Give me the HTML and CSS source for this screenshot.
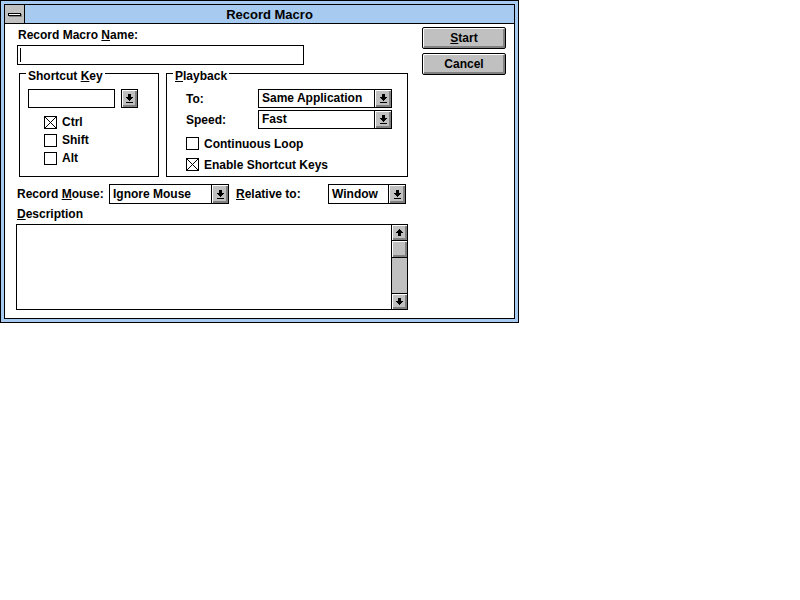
FILE: index.html
```html
<!DOCTYPE html>
<html lang="en">
<head>
    <meta charset="UTF-8">
    <title>Record Macro</title>
    <link rel="stylesheet" href="styles.css">
</head>
<body>
<div class="window">
  <div class="frame">
    <div class="titlebar">
        <div class="sysmenu"><span class="sysbar"></span></div>
        <div class="title">Record Macro</div>
    </div>

    <div class="dialog">
      <div class="main">
        <div class="label name-label">Record Macro <u>N</u>ame:</div>
        <div class="textbox name-input"><span class="caret"></span></div>

        <div class="groups">
          <fieldset class="group shortcut">
            <legend>Shortcut <u>K</u>ey</legend>
            <div class="key-row">
                <div class="textbox key-input"></div>
                <div class="btn3d drop-btn">
                    <svg width="7" height="9" viewBox="0 0 7 9" shape-rendering="crispEdges"><path d="M2 0h3v3h2v1h-1v1h-1v1h-1v1h-1v-1h-1v-1h-1v-1h-1v-1h2z" fill="#000"/><rect x="0" y="8" width="7" height="1" fill="#000"/></svg>
                </div>
            </div>
            <div class="checks">
                <div class="check-row"><span class="box checked"></span>Ctrl</div>
                <div class="check-row"><span class="box"></span>Shift</div>
                <div class="check-row"><span class="box"></span>Alt</div>
            </div>
          </fieldset>

          <fieldset class="group playback">
            <legend><u>P</u>layback</legend>
            <div class="pb-body">
                <div class="field-row">
                    <span class="field-label">To:</span>
                    <div class="combo wide">
                        <span class="combo-text">Same Application</span>
                        <span class="btn3d combo-btn"><svg width="7" height="9" viewBox="0 0 7 9" shape-rendering="crispEdges"><path d="M2 0h3v3h2v1h-1v1h-1v1h-1v1h-1v-1h-1v-1h-1v-1h-1v-1h2z" fill="#000"/><rect x="0" y="8" width="7" height="1" fill="#000"/></svg></span>
                    </div>
                </div>
                <div class="field-row second">
                    <span class="field-label">Speed:</span>
                    <div class="combo wide">
                        <span class="combo-text">Fast</span>
                        <span class="btn3d combo-btn"><svg width="7" height="9" viewBox="0 0 7 9" shape-rendering="crispEdges"><path d="M2 0h3v3h2v1h-1v1h-1v1h-1v1h-1v-1h-1v-1h-1v-1h-1v-1h2z" fill="#000"/><rect x="0" y="8" width="7" height="1" fill="#000"/></svg></span>
                    </div>
                </div>
                <div class="check-row tall first"><span class="box"></span>Continuous Loop</div>
                <div class="check-row tall"><span class="box checked"></span>Enable Shortcut Keys</div>
            </div>
          </fieldset>
        </div>

        <div class="mouse-row">
            <span class="label mouse-label">Record <u>M</u>ouse:</span>
            <div class="combo mouse">
                <span class="combo-text">Ignore Mouse</span>
                <span class="btn3d combo-btn"><svg width="7" height="9" viewBox="0 0 7 9" shape-rendering="crispEdges"><path d="M2 0h3v3h2v1h-1v1h-1v1h-1v1h-1v-1h-1v-1h-1v-1h-1v-1h2z" fill="#000"/><rect x="0" y="8" width="7" height="1" fill="#000"/></svg></span>
            </div>
            <span class="label rel-label"><u>R</u>elative to:</span>
            <div class="combo rel">
                <span class="combo-text">Window</span>
                <span class="btn3d combo-btn"><svg width="7" height="9" viewBox="0 0 7 9" shape-rendering="crispEdges"><path d="M2 0h3v3h2v1h-1v1h-1v1h-1v1h-1v-1h-1v-1h-1v-1h-1v-1h2z" fill="#000"/><rect x="0" y="8" width="7" height="1" fill="#000"/></svg></span>
            </div>
        </div>

        <div class="label desc-label"><u>D</u>escription</div>
        <div class="memo">
            <div class="memo-text"></div>
            <div class="scrollbar">
                <div class="btn3d sb-btn up">
                    <svg width="7" height="7" viewBox="0 0 7 7" shape-rendering="crispEdges"><path d="M3 0h1v1h1v1h1v1h1v1h-2v3h-3v-3h-2v-1h1v-1h1v-1h1z" fill="#000"/></svg>
                </div>
                <div class="btn3d sb-thumb"></div>
                <div class="sb-track"></div>
                <div class="btn3d sb-btn down">
                    <svg width="7" height="7" viewBox="0 0 7 7" shape-rendering="crispEdges"><path d="M2 0h3v3h2v1h-1v1h-1v1h-1v1h-1v-1h-1v-1h-1v-1h-1v-1h2z" fill="#000"/></svg>
                </div>
            </div>
        </div>
      </div>

      <div class="buttons">
          <div class="btn3d push"><span><u>S</u>tart</span></div>
          <div class="btn3d push"><span>Cancel</span></div>
      </div>
    </div>
  </div>
</div>
</body>
</html>
```

FILE: styles.css
```css
body{
    margin: 0;
    background: #fff;
    font-family: "Liberation Sans", Arial, sans-serif;
    font-weight: bold;
    font-size: 12px;
    color: #000;
}
u{
    text-decoration-thickness: 1px;
    text-underline-offset: 1px;
}

.window{
    width: 519px;
    height: 323px;
    box-sizing: border-box;
    border: 1px solid #000;
    padding: 3px;
    background: #a6caf0;
}
.frame{
    height: 100%;
    box-sizing: border-box;
    border: 1px solid #000;
    background: #fff;
    display: flex;
    flex-direction: column;
}

/* title bar */
.titlebar{
    height: 18px;
    flex: none;
    display: flex;
    background: #a6caf0;
    border-bottom: 1px solid #000;
}
.sysmenu{
    width: 19px;
    background: #c0c0c0;
    border-right: 1px solid #000;
    display: flex;
    align-items: center;
    justify-content: center;
}
.sysbar{
    width: 11px;
    height: 1px;
    background: #fff;
    border: 1px solid #000;
    box-shadow: 1px 1px 0 #808080;
}
.title{
    flex: 1;
    text-align: center;
    font-size: 13px;
    line-height: 19px;
}

/* dialog body */
.dialog{
    flex: 1;
    display: flex;
    padding: 3px 0 0 11px;
}
.main{
    width: 392px;
    padding-top: 1px;
}
.label{
    line-height: 15px;
    white-space: nowrap;
}
.name-label{
    margin-left: 2px;
}
.textbox{
    box-sizing: border-box;
    border: 1px solid #000;
    background: #fff;
}
.name-input{
    width: 287px;
    height: 20px;
    margin: 2px 0 0 1px;
    padding: 2px 0 0 2px;
}
.caret{
    display: block;
    width: 1px;
    height: 14px;
    background: #000;
}

/* raised 3d look */
.btn3d{
    background: #c0c0c0;
    box-shadow: inset 1px 1px 0 #fff, inset -1px -1px 0 #808080, inset -2px -2px 0 #808080;
    display: flex;
    align-items: center;
    justify-content: center;
    box-sizing: border-box;
}

/* group boxes */
.groups{
    display: flex;
    gap: 7px;
    margin: 0 0 0 3px;
    height: 112px;
}
.group{
    box-sizing: border-box;
    margin: 0;
    border: 1px solid #000;
    padding: 7px 0 0 0;
    min-width: 0;
}
.group legend{
    margin-left: 6px;
    padding: 6px 2px 0;
    line-height: 11px;
}
.shortcut{
    width: 140px;
}
.playback{
    width: 242px;
}
.pb-body{
    margin-left: 19px;
}

.key-row{
    display: flex;
    gap: 6px;
    height: 19px;
    margin-left: 8px;
}
.key-input{
    width: 87px;
    height: 19px;
}
.drop-btn{
    width: 17px;
    height: 19px;
    border: 1px solid #000;
}

.checks{
    margin: 5px 0 0 24px;
}
.check-row{
    display: flex;
    align-items: center;
    height: 18px;
    white-space: nowrap;
}
.check-row.tall{
    height: 21px;
}
.check-row.first{
    margin-top: 4px;
}
.box{
    width: 13px;
    height: 13px;
    box-sizing: border-box;
    border: 1px solid #000;
    background: #fff;
    margin-right: 5px;
    flex: none;
}
.box.checked{
    background:
        linear-gradient(45deg, transparent calc(50% - 0.6px), #000 calc(50% - 0.6px), #000 calc(50% + 0.6px), transparent calc(50% + 0.6px)),
        linear-gradient(-45deg, transparent calc(50% - 0.6px), #000 calc(50% - 0.6px), #000 calc(50% + 0.6px), transparent calc(50% + 0.6px)),
        #fff;
}

/* combo boxes */
.field-row{
    display: flex;
    align-items: center;
    height: 19px;
}
.field-row.second{
    margin-top: 2px;
}
.field-label{
    width: 72px;
    flex: none;
}
.combo{
    display: flex;
    box-sizing: border-box;
    border: 1px solid #000;
    background: #fff;
    height: 19px;
}
.combo-text{
    flex: 1;
    padding-left: 3px;
    line-height: 17px;
    white-space: nowrap;
}
.combo-btn{
    width: 17px;
    border-left: 1px solid #000;
}
.wide{
    width: 134px;
}

.mouse-row{
    display: flex;
    align-items: center;
    margin: 7px 0 0 1px;
    height: 20px;
}
.mouse-row .combo{
    height: 20px;
}
.mouse-row .combo-text{
    line-height: 18px;
}
.mouse-label{
    width: 92px;
}
.mouse{
    width: 120px;
}
.rel-label{
    width: 92px;
    margin-left: 7px;
}
.rel{
    width: 78px;
}

.desc-label{
    margin: 3px 0 2px 1px;
}

/* description box */
.memo{
    display: flex;
    box-sizing: border-box;
    width: 392px;
    height: 86px;
    border: 1px solid #000;
}
.memo-text{
    flex: 1;
}
.scrollbar{
    width: 16px;
    border-left: 1px solid #000;
    display: flex;
    flex-direction: column;
    box-sizing: border-box;
    background: #c0c0c0;
}
.sb-btn{
    height: 16px;
    flex: none;
}
.sb-btn.up{
    border-bottom: 1px solid #000;
}
.sb-btn.down{
    border-top: 1px solid #000;
}
.sb-thumb{
    height: 17px;
    flex: none;
    border-bottom: 1px solid #000;
}
.sb-track{
    flex: 1;
}

/* push buttons */
.buttons{
    margin-left: 14px;
    display: flex;
    flex-direction: column;
    gap: 4px;
}
.push{
    width: 84px;
    height: 22px;
    border: 1px solid #000;
    border-radius: 2px;
    font-size: 12px;
}
```
